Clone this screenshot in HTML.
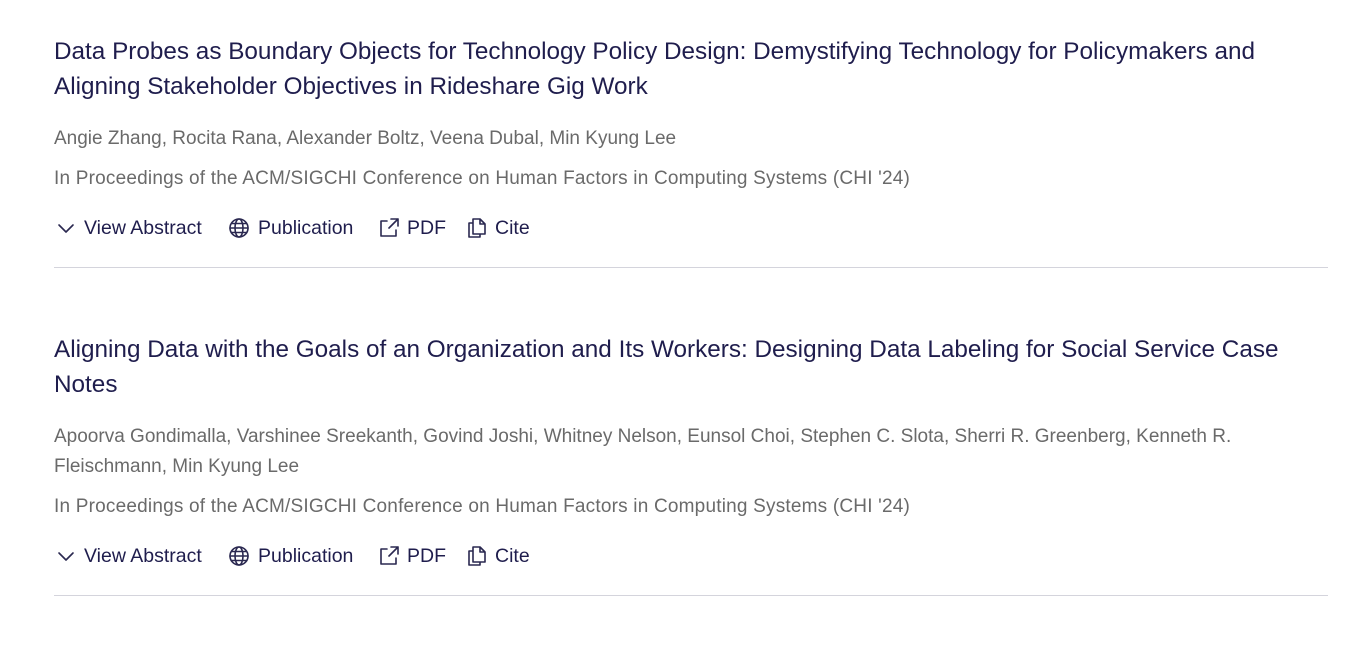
<!DOCTYPE html>
<html><head><meta charset="utf-8"><style>
body{margin:0;background:#fff;width:1351px;height:656px;overflow:hidden;position:relative;font-family:"Liberation Sans",sans-serif}
.t{position:absolute;left:54px;white-space:nowrap;color:#1f1d4d;font-size:24.3px;line-height:35px}
.a{position:absolute;left:54px;white-space:nowrap;color:#6a6a6a;font-size:19px;line-height:30px}
.v{letter-spacing:0.2px}
.i{position:absolute;white-space:nowrap;color:#1f1d4d;font-size:19.5px;line-height:30px}
.s{position:absolute;width:22px;height:22px;fill:none;stroke:#2a2850;stroke-width:1.6;stroke-linecap:round;stroke-linejoin:round}
hr{position:absolute;left:54px;width:1274px;margin:0;border:0;border-top:1px solid #d4d4dc}
</style></head><body>
<div class="t" style="top:34px">Data Probes as Boundary Objects for Technology Policy Design: Demystifying Technology for Policymakers and</div>
<div class="t" style="top:69px">Aligning Stakeholder Objectives in Rideshare Gig Work</div>
<div class="a" style="top:124px">Angie Zhang, Rocita Rana, Alexander Boltz, Veena Dubal, Min Kyung Lee</div>
<div class="a v" style="top:164px">In Proceedings of the ACM/SIGCHI Conference on Human Factors in Computing Systems (CHI '24)</div>

<svg class="s" style="left:55px;top:217px" viewBox="0 0 22 22"><path d="M4 8l7 7 7-7"/></svg>
<div class="i" style="left:84px;top:213px">View Abstract</div>
<svg class="s" style="left:228px;top:217px" viewBox="0 0 22 22"><circle cx="11" cy="11" r="9"/><ellipse cx="11" cy="11" rx="4" ry="9"/><path d="M2 11h18M3.5 6.5h15M3.5 15.5h15"/></svg>
<div class="i" style="left:258px;top:213px">Publication</div>
<svg class="s" style="left:378px;top:217px" viewBox="0 0 22 22"><path d="M9 4H3v15h15v-6M13 2h7v7M20 2l-9 9"/></svg>
<div class="i" style="left:407px;top:213px">PDF</div>
<svg class="s" style="left:466px;top:217px" viewBox="0 0 22 22"><path d="M7 2h7l5 5v10H7zM14 2v5h5M7 6H3v14h11v-3"/></svg>
<div class="i" style="left:495px;top:213px">Cite</div>
<hr style="top:267px">

<div class="t" style="top:332px">Aligning Data with the Goals of an Organization and Its Workers: Designing Data Labeling for Social Service Case</div>
<div class="t" style="top:367px">Notes</div>
<div class="a" style="top:422px">Apoorva Gondimalla, Varshinee Sreekanth, Govind Joshi, Whitney Nelson, Eunsol Choi, Stephen C. Slota, Sherri R. Greenberg, Kenneth R.</div>
<div class="a" style="top:452px">Fleischmann, Min Kyung Lee</div>
<div class="a v" style="top:492px">In Proceedings of the ACM/SIGCHI Conference on Human Factors in Computing Systems (CHI '24)</div>

<svg class="s" style="left:55px;top:545px" viewBox="0 0 22 22"><path d="M4 8l7 7 7-7"/></svg>
<div class="i" style="left:84px;top:541px">View Abstract</div>
<svg class="s" style="left:228px;top:545px" viewBox="0 0 22 22"><circle cx="11" cy="11" r="9"/><ellipse cx="11" cy="11" rx="4" ry="9"/><path d="M2 11h18M3.5 6.5h15M3.5 15.5h15"/></svg>
<div class="i" style="left:258px;top:541px">Publication</div>
<svg class="s" style="left:378px;top:545px" viewBox="0 0 22 22"><path d="M9 4H3v15h15v-6M13 2h7v7M20 2l-9 9"/></svg>
<div class="i" style="left:407px;top:541px">PDF</div>
<svg class="s" style="left:466px;top:545px" viewBox="0 0 22 22"><path d="M7 2h7l5 5v10H7zM14 2v5h5M7 6H3v14h11v-3"/></svg>
<div class="i" style="left:495px;top:541px">Cite</div>
<hr style="top:595px">
</body></html>
